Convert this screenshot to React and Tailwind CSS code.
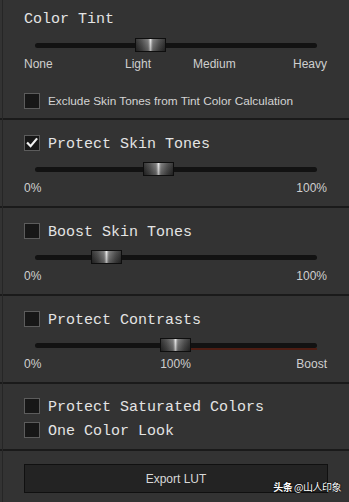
import React from "react";

const mono = { fontFamily: '"Liberation Mono", "DejaVu Sans Mono", monospace' };

function Checkbox({ checked }) {
  return (
    <div className="w-[16px] h-[16px] shrink-0 border border-[#5c5c5c] bg-[#171717] flex items-center justify-center">
      {checked && (
        <svg width="12" height="12" viewBox="0 0 12 12">
          <path d="M1.8 6.2 L4.6 9.2 L10.4 2.2" fill="none" stroke="#f0f0f0" strokeWidth="2.2" strokeLinecap="square" />
        </svg>
      )}
    </div>
  );
}

function Slider({ pos, red }) {
  return (
    <div className="relative h-[14px] ml-[11px] mr-[10px] flex items-center">
      <div className="w-full h-[5px] rounded-full bg-[#121212]" />
      {red && (
        <div className="absolute right-0 top-[10px] h-[2px] bg-[#4e1d13]" style={{ left: pos + 31 }} />
      )}
      <div
        className="absolute top-0 h-[14px] w-[31px] border border-[#0e0e0e] bg-[linear-gradient(to_right,#2a2a2a_0%,#4a4a4a_20%,#7a7a7a_42%,#e6e6e6_50%,#7a7a7a_58%,#4a4a4a_80%,#2a2a2a_100%)]"
        style={{ left: pos }}
      >
        <div className="w-full h-full bg-[linear-gradient(to_bottom,rgba(255,255,255,0.08),rgba(0,0,0,0.25))]" />
      </div>
    </div>
  );
}

function Title({ children }) {
  return (
    <div className="pt-[2px] text-[15px] leading-[16px] text-[#e4e4e4] whitespace-nowrap" style={mono}>
      {children}
    </div>
  );
}

function Row({ checked, children }) {
  return (
    <div className="flex items-start gap-[8px]">
      <Checkbox checked={checked} />
      <Title>{children}</Title>
    </div>
  );
}

function Sep() {
  return <div className="h-[2px] bg-[#1a1a1a]" />;
}

export default function App() {
  const sans = { fontFamily: '"Liberation Sans", Arial, sans-serif' };
  return (
    <div className="w-[349px] h-[502px] bg-[#333333] overflow-hidden relative" style={sans}>
      <div className="absolute left-[2px] top-0 bottom-0 w-[1px] bg-[#262626]" />
      {/* Section 1 */}
      <div className="h-[118px] pl-[24px] pr-[22px] pt-[10px] flex flex-col">
        <Title>Color Tint</Title>
        <div className="mt-[10px]">
          <Slider pos={100} />
        </div>
        <div className="mt-[5px] flex text-[12px] leading-[14px] text-[#cfcfcf]">
          <div className="w-[101px]">None</div>
          <div className="w-[68px]">Light</div>
          <div className="flex-1">Medium</div>
          <div>Heavy</div>
        </div>
        <div className="mt-[22px] flex items-center gap-[8px]">
          <Checkbox />
          <span className="text-[11.8px] leading-[16px] text-[#d4d4d4] whitespace-nowrap">
            Exclude Skin Tones from Tint Color Calculation
          </span>
        </div>
      </div>
      <Sep />
      {/* Section 2 */}
      <div className="h-[86px] pl-[24px] pr-[22px] pt-[15px] flex flex-col">
        <Row checked>Protect Skin Tones</Row>
        <div className="mt-[9px]">
          <Slider pos={108} />
        </div>
        <div className="mt-[5px] flex justify-between text-[12px] leading-[14px] text-[#cfcfcf]">
          <span>0%</span>
          <span>100%</span>
        </div>
      </div>
      <Sep />
      {/* Section 3 */}
      <div className="h-[86px] pl-[24px] pr-[22px] pt-[15px] flex flex-col">
        <Row>Boost Skin Tones</Row>
        <div className="mt-[9px]">
          <Slider pos={56} />
        </div>
        <div className="mt-[5px] flex justify-between text-[12px] leading-[14px] text-[#cfcfcf]">
          <span>0%</span>
          <span>100%</span>
        </div>
      </div>
      <Sep />
      {/* Section 4 */}
      <div className="h-[86px] pl-[24px] pr-[22px] pt-[15px] flex flex-col">
        <Row>Protect Contrasts</Row>
        <div className="mt-[9px]">
          <Slider pos={125} red />
        </div>
        <div className="mt-[5px] grid grid-cols-3 text-[12px] leading-[14px] text-[#cfcfcf]">
          <span className="text-left">0%</span>
          <span className="text-center">100%</span>
          <span className="text-right">Boost</span>
        </div>
      </div>
      <Sep />
      {/* Section 5 */}
      <div className="h-[65px] pl-[24px] pr-[22px] pt-[14px] flex flex-col gap-[6px]">
        <Row>Protect Saturated Colors</Row>
        <Row>One Color Look</Row>
      </div>
      <Sep />
      {/* Section 6 */}
      <div className="pl-[24px] pr-[21px] pt-[13px]">
        <div className="h-[29px] bg-[#232323] border border-[#101010] flex items-center justify-center text-[12px] text-[#d8d8d8]">
          Export LUT
        </div>
      </div>
      <div
        className="absolute right-[8px] bottom-[9px] text-[10px] leading-[12px] tracking-[-0.5px] text-white [text-shadow:0_0_2px_#000,0_0_1px_#000]"
        style={{ fontFamily: '"Noto Sans CJK SC", "Liberation Sans", sans-serif' }}
      >
        <span className="font-bold">头条</span> @山人印象
      </div>
    </div>
  );
}
